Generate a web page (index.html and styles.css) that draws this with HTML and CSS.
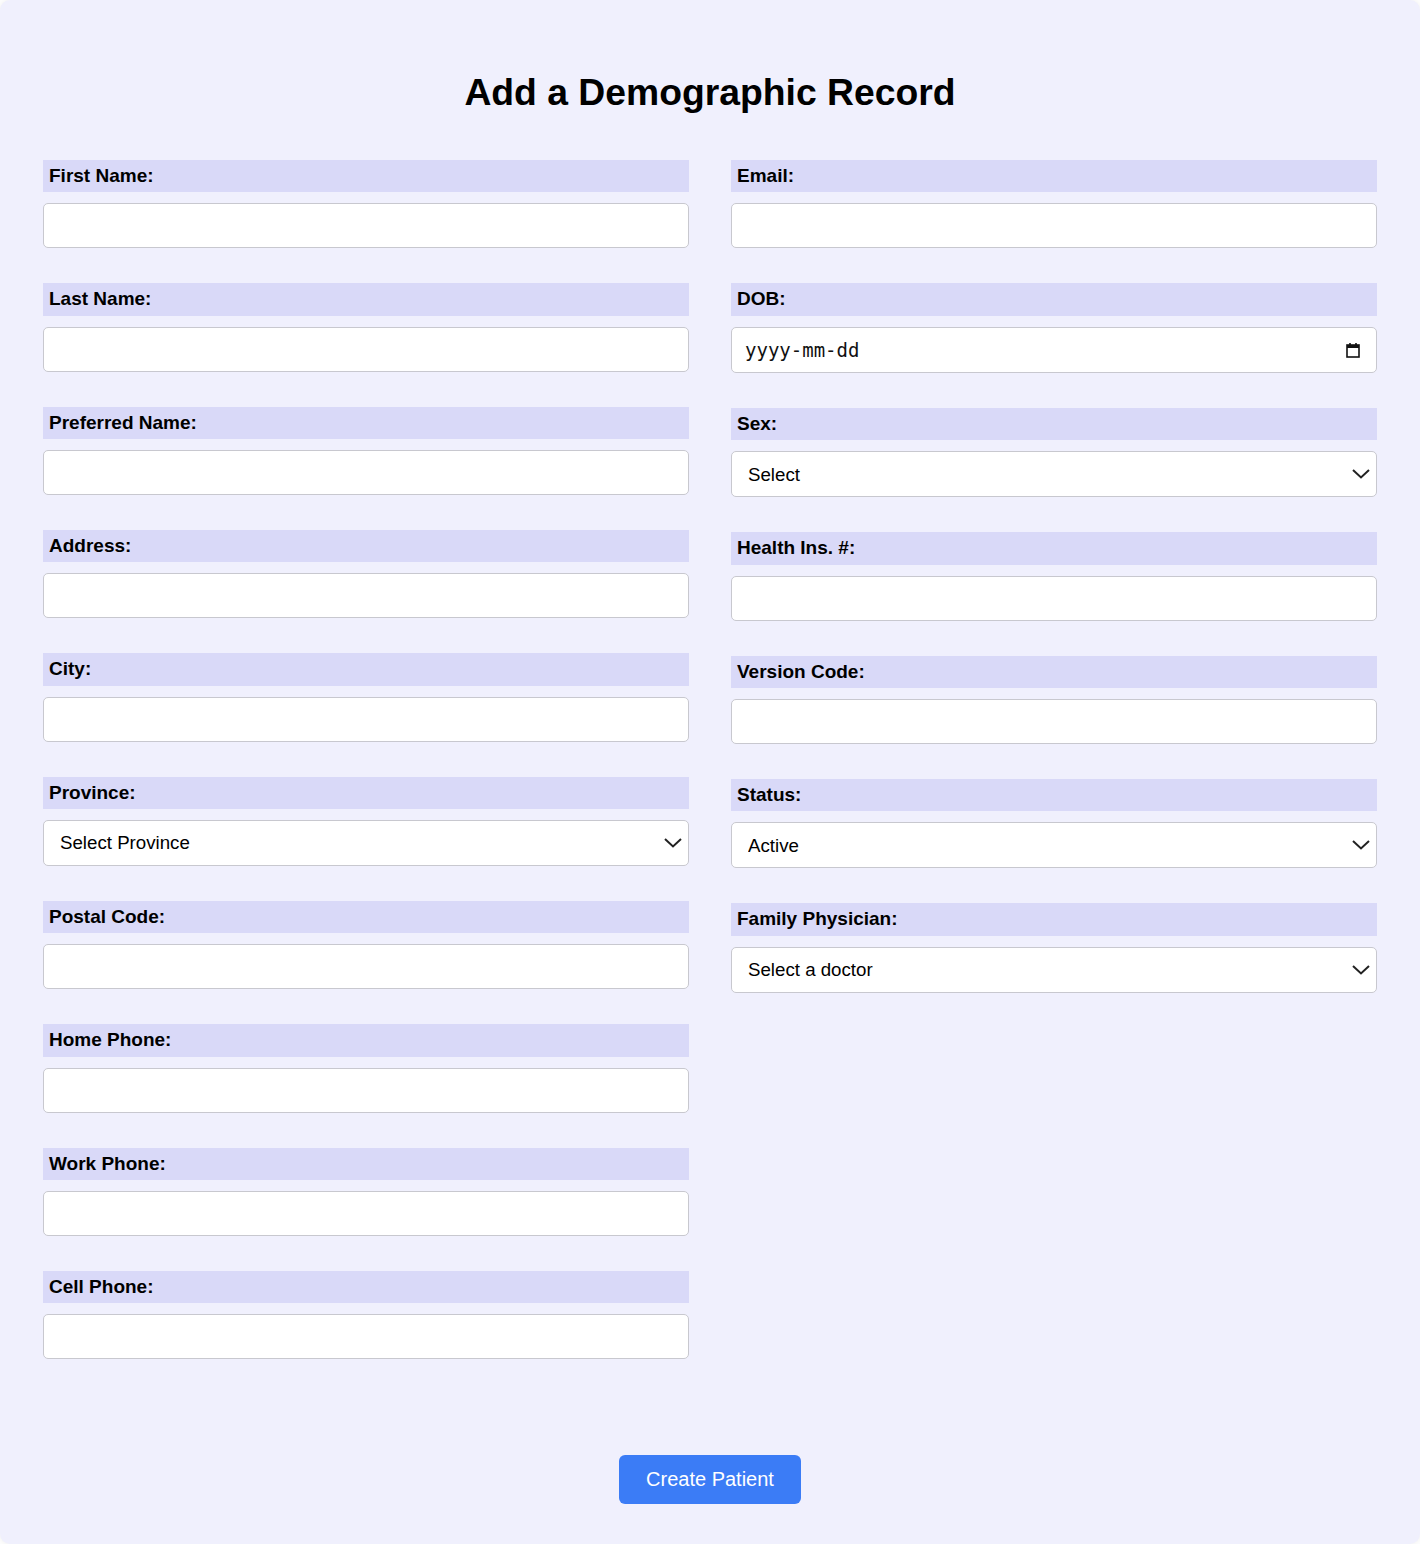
FILE: index.html
```html
<!DOCTYPE html>
<html lang="en">
<head>
<meta charset="utf-8">
<title>Add a Demographic Record</title>
<link rel="stylesheet" href="styles.css">
</head>
<body>
<div class="container">
  <h1 class="title">Add a Demographic Record</h1>
  <form class="form">
    <div class="columns">
      <div class="column">
        <div class="field"><label class="label">First Name:</label><input class="input" type="text"></div>
        <div class="field"><label class="label">Last Name:</label><input class="input" type="text"></div>
        <div class="field"><label class="label">Preferred Name:</label><input class="input" type="text"></div>
        <div class="field"><label class="label">Address:</label><input class="input" type="text"></div>
        <div class="field"><label class="label">City:</label><input class="input" type="text"></div>
        <div class="field"><label class="label">Province:</label>
          <div class="select-wrap"><select class="select"><option>Select Province</option></select>
            <svg class="chev" width="18" height="10" viewBox="0 0 18 10"><path d="M1 1 L9 8.5 L17 1" fill="none" stroke="#222" stroke-width="2"/></svg></div>
        </div>
        <div class="field"><label class="label">Postal Code:</label><input class="input" type="text"></div>
        <div class="field"><label class="label">Home Phone:</label><input class="input" type="text"></div>
        <div class="field"><label class="label">Work Phone:</label><input class="input" type="text"></div>
        <div class="field"><label class="label">Cell Phone:</label><input class="input" type="text"></div>
      </div>
      <div class="column">
        <div class="field"><label class="label">Email:</label><input class="input" type="text"></div>
        <div class="field"><label class="label">DOB:</label>
          <div class="date-wrap"><input class="input date" type="text" placeholder="yyyy-mm-dd">
            <svg class="cal" width="14" height="16" viewBox="0 0 14 16"><rect x="1" y="3" width="12" height="12" fill="none" stroke="#111" stroke-width="1.6"/><rect x="1" y="3" width="12" height="3" fill="#111"/><rect x="3.2" y="1" width="1.6" height="3" fill="#111"/><rect x="9.2" y="1" width="1.6" height="3" fill="#111"/></svg></div>
        </div>
        <div class="field"><label class="label">Sex:</label>
          <div class="select-wrap"><select class="select"><option>Select</option></select>
            <svg class="chev" width="18" height="10" viewBox="0 0 18 10"><path d="M1 1 L9 8.5 L17 1" fill="none" stroke="#222" stroke-width="2"/></svg></div>
        </div>
        <div class="field"><label class="label">Health Ins. #:</label><input class="input" type="text"></div>
        <div class="field"><label class="label">Version Code:</label><input class="input" type="text"></div>
        <div class="field"><label class="label">Status:</label>
          <div class="select-wrap"><select class="select"><option>Active</option></select>
            <svg class="chev" width="18" height="10" viewBox="0 0 18 10"><path d="M1 1 L9 8.5 L17 1" fill="none" stroke="#222" stroke-width="2"/></svg></div>
        </div>
        <div class="field"><label class="label">Family Physician:</label>
          <div class="select-wrap"><select class="select"><option>Select a doctor</option></select>
            <svg class="chev" width="18" height="10" viewBox="0 0 18 10"><path d="M1 1 L9 8.5 L17 1" fill="none" stroke="#222" stroke-width="2"/></svg></div>
        </div>
      </div>
    </div>
    <div class="actions"><button class="button" type="button">Create Patient</button></div>
  </form>
</div>
</body>
</html>
```
FILE: styles.css
```css
* { box-sizing: border-box; }
html, body { margin: 0; padding: 0; background: #ffffff; }
body { font-family: "Liberation Sans", Arial, sans-serif; color: #000; }
.container {
  background: #f0f0fd;
  border-radius: 10px;
  box-shadow: 0 0 8px rgba(0,0,0,0.08);
  padding: 71px 43px 40px;
  min-height: 1544px;
}
.title {
  margin: 0 0 47px;
  text-align: center;
  font-size: 37.3px;
  font-weight: bold;
  line-height: 42px;
}
.columns {
  display: grid;
  grid-template-columns: 1fr 1fr;
  column-gap: 42px;
  align-items: start;
}
.column { display: flex; flex-direction: column; gap: 35px; }
.field { display: flex; flex-direction: column; gap: 11px; }
.label {
  display: block;
  background: #d9d9f8;
  font-weight: bold;
  font-size: 19px;
  line-height: 21px;
  padding: 5px 6px 6.33px;
}
.input {
  width: 100%;
  height: 45px;
  border: 1px solid #c8c8cf;
  border-radius: 5px;
  background: #fff;
  font-family: "Liberation Sans", Arial, sans-serif;
  font-size: 18.7px;
  padding: 0 16px;
  outline: none;
}
.date-wrap, .select-wrap { position: relative; }
.date { height: 46.5px; padding-left: 13px; font-family: "DejaVu Sans Mono", monospace; font-size: 19px; }
.date::placeholder { color: #111; }
.cal { position: absolute; right: 17px; top: 15px; }
.select {
  width: 100%;
  height: 46px;
  appearance: none;
  -webkit-appearance: none;
  border: 1px solid #c8c8cf;
  border-radius: 5px;
  background: #fff;
  font-family: "Liberation Sans", Arial, sans-serif;
  font-size: 18.7px;
  color: #000;
  padding: 0 16px;
}
.chev { position: absolute; right: 7px; top: 18px; pointer-events: none; }
.actions { display: flex; justify-content: center; margin-top: 96px; }
.button {
  width: 182px;
  height: 49px;
  background: #3b7cf6;
  color: #fff;
  border: none;
  border-radius: 6px;
  font-family: "Liberation Sans", Arial, sans-serif;
  font-size: 20px;
}
```
